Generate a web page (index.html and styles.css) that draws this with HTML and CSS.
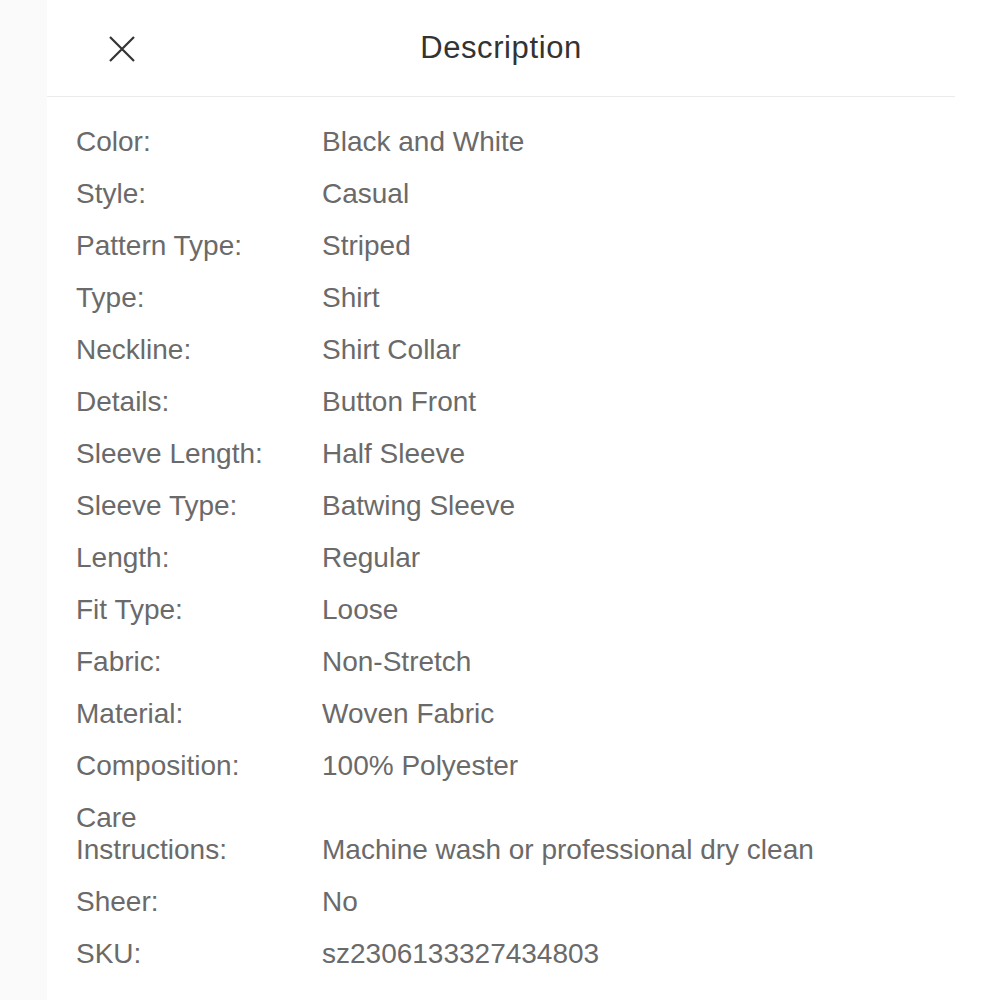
FILE: index.html
```html
<!DOCTYPE html>
<html>
<head>
  <title>Description</title>
  <link rel="stylesheet" href="styles.css">
</head>
<body>
  <div class="page">
    <div class="side"></div>
    <div class="panel">
      <div class="header">
        <div class="close">
          <svg width="28" height="28" viewBox="0 0 28 28">
            <path d="M2 2 L26 26 M26 2 L2 26" stroke="#333" stroke-width="2.2" fill="none"/>
          </svg>
        </div>
        <h1 class="title">Description</h1>
        <div></div>
      </div>

      <div class="specs">
        <div class="label">Color:</div><div class="value">Black and White</div>
        <div class="label">Style:</div><div class="value">Casual</div>
        <div class="label">Pattern Type:</div><div class="value">Striped</div>
        <div class="label">Type:</div><div class="value">Shirt</div>
        <div class="label">Neckline:</div><div class="value">Shirt Collar</div>
        <div class="label">Details:</div><div class="value">Button Front</div>
        <div class="label">Sleeve Length:</div><div class="value">Half Sleeve</div>
        <div class="label">Sleeve Type:</div><div class="value">Batwing Sleeve</div>
        <div class="label">Length:</div><div class="value">Regular</div>
        <div class="label">Fit Type:</div><div class="value">Loose</div>
        <div class="label">Fabric:</div><div class="value">Non-Stretch</div>
        <div class="label">Material:</div><div class="value">Woven Fabric</div>
        <div class="label">Composition:</div><div class="value">100% Polyester</div>
        <div class="label">Care Instructions:</div><div class="value">Machine wash or professional dry clean</div>
        <div class="label">Sheer:</div><div class="value">No</div>
        <div class="label">SKU:</div><div class="value">sz2306133327434803</div>
      </div>
    </div>
  </div>
</body>
</html>
```

FILE: styles.css
```css
body {
  margin: 0;
  background: #fff;
  font-family: "Liberation Sans", Arial, sans-serif;
}

.page {
  display: flex;
  min-height: 1000px;
}

.side {
  width: 47px;
  background: #fafafa;
}

.panel {
  width: 908px;
  background: #fff;
}

/* header */
.header {
  display: grid;
  grid-template-columns: 1fr auto 1fr;
  align-items: center;
  height: 96px;
  border-bottom: 1px solid #ebebeb;
}

.close {
  display: flex;
  padding-left: 61px;
  padding-top: 1px;
}

.title {
  margin: 0;
  font-size: 31px;
  font-weight: normal;
  letter-spacing: 0.6px;
  color: #333;
}

/* spec list */
.specs {
  display: grid;
  grid-template-columns: 200px 1fr;
  column-gap: 46px;
  row-gap: 20px;
  padding: 29px 0 0 29px;
  font-size: 28px;
  line-height: 32px;
  color: #6a6a6a;
}

.value {
  align-self: end;
}
```
